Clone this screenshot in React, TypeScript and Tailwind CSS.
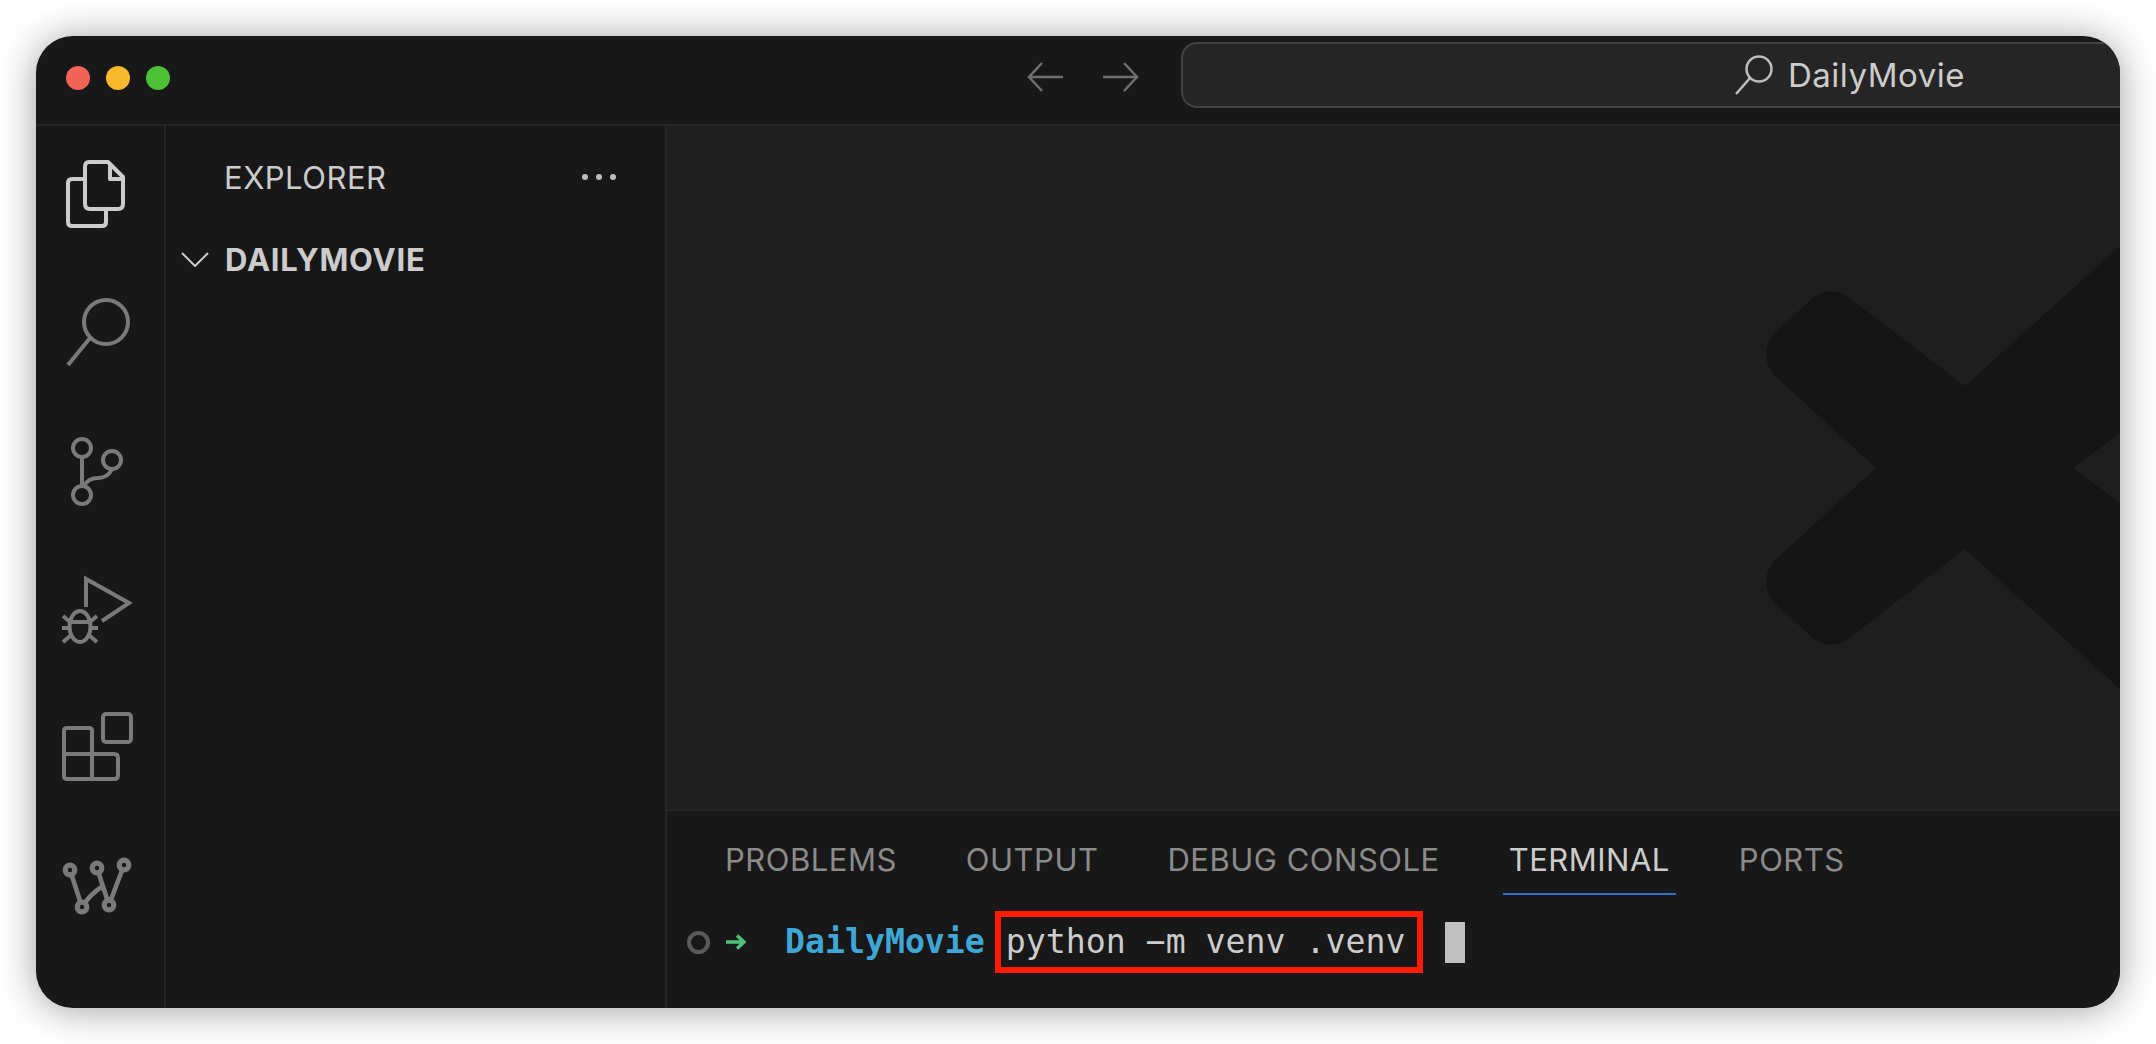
import React from "react";

const ui = "font-['Inter','Noto_Sans',sans-serif]";

function Cell({ i, children }: { i: number; children: React.ReactNode }) {
  const y0 = 127 + 139 * i;
  return (
    <svg
      width="128"
      height="139"
      viewBox={`36 ${y0} 128 139`}
      fill="none"
      strokeWidth="4"
      strokeLinejoin="round"
      className="block shrink-0"
    >
      {children}
    </svg>
  );
}

function WDot({ x, y }: { x: number; y: number }) {
  return (
    <g>
      <circle cx={x} cy={y} r="7.4" fill="#7a7a7a" />
      <circle cx={x} cy={y} r="2.2" fill="#181818" />
    </g>
  );
}

function ActivityBar() {
  const c = "#7a7a7a";
  return (
    <div className="w-[128px] shrink-0 flex flex-col border-r-2 border-[#262626] box-content">
      <Cell i={0}>
        <path stroke="#cccccc" d="M89 163H108L123 178V205Q123 210 118 210H90Q85 210 85 205V168Q85 163 89 163Z" />
        <path stroke="#cccccc" d="M110 165V180H123" />
        <path stroke="#cccccc" d="M85 180H72Q68 180 68 184V223Q68 227 72 227H102Q106 227 106 223V210" />
      </Cell>
      <Cell i={1}>
        <circle cx="106" cy="323" r="22" stroke={c} />
        <path stroke={c} d="M90 339L68 366" />
      </Cell>
      <Cell i={2}>
        <circle cx="82" cy="449" r="9" stroke={c} />
        <circle cx="112" cy="461" r="9" stroke={c} />
        <circle cx="82" cy="496" r="9" stroke={c} />
        <path stroke={c} d="M82 458V487M84 487Q88 479 98 479Q108 479 112 470" />
      </Cell>
      <Cell i={3}>
        <path stroke={c} d="M86 608V580L129 604L102 622" strokeLinejoin="miter" />
        <ellipse cx="80" cy="627.5" rx="10.5" ry="15.5" stroke={c} />
        <path stroke={c} d="M70 623H90M62 629H69M91 629H98M63 617L69 622M97 617L91 622M63 643L70 637M97 643L90 637" />
      </Cell>
      <Cell i={4}>
        <path stroke={c} d="M67 729H89Q92 729 92 732V780H67Q64 780 64 777V732Q64 729 67 729Z" />
        <path stroke={c} d="M64 755H114Q118 755 118 759V776Q118 780 114 780H92" />
        <rect x="103" y="715" width="28" height="28" rx="3" stroke={c} />
      </Cell>
      <Cell i={5}>
        <path stroke={c} strokeWidth="4.6" d="M70 871L82 908Q90 895 103 887M97 869L109 906L124 866" />
        <WDot x={70} y={871} />
        <WDot x={97} y={869} />
        <WDot x={124} y={866} />
        <WDot x={82} y={908} />
        <WDot x={109} y={906} />
      </Cell>
    </div>
  );
}

function Sidebar() {
  return (
    <div className={`w-[499px] shrink-0 border-r-2 border-[#262626] box-content flex flex-col text-[#cccccc] ${ui}`}>
      <div className="h-[102px] flex items-center justify-between pl-[58px] pr-[48px]">
        <span className="text-[31px] leading-none tracking-[0.5px]">EXPLORER</span>
        <svg width="36" height="6" viewBox="0 0 36 6" fill="#bdbdbd">
          <circle cx="4" cy="3" r="3" />
          <circle cx="18" cy="3" r="3" />
          <circle cx="32" cy="3" r="3" />
        </svg>
      </div>
      <div className="h-[62px] flex items-center pl-[15px]">
        <svg width="28" height="15" viewBox="0 0 28 15" fill="none" stroke="#cccccc" strokeWidth="2">
          <path d="M1 1L14 14L27 1" />
        </svg>
        <span className="ml-[16px] text-[31px] leading-none font-bold tracking-[0.8px]">DAILYMOVIE</span>
      </div>
    </div>
  );
}

function Watermark() {
  return (
    <svg className="absolute left-[1099px] top-[74px]" width="354" height="610" viewBox="1766 200 354 610" fill="#151515">
      <path d="M1965 386L2120 246V433L2073 468L2120 503V689L1965 549L1848 639Q1831 650 1815 640L1775 603Q1757 581 1775 560L1876 468L1775 376Q1757 354 1775 333L1815 296Q1831 286 1848 297Z" />
    </svg>
  );
}

const tabs: [string, number][] = [
  ["PROBLEMS", 0],
  ["OUTPUT", 0],
  ["DEBUG CONSOLE", 0],
  ["TERMINAL", 1],
  ["PORTS", 0],
];

function Panel() {
  return (
    <div className="h-[199px] shrink-0 border-t-2 border-[#262626] bg-[#181818] flex flex-col">
      <div className={`h-[84px] flex pl-[58px] gap-[69px] ${ui}`}>
        {tabs.map(([t, active]) => (
          <div key={t} className="relative h-full flex items-center pt-[13px]">
            <span className={`text-[31px] leading-none tracking-[0.5px] ${active ? "text-[#cccccc]" : "text-[#8b8b8b]"}`}>{t}</span>
            {active ? <div className="absolute -left-[6px] -right-[6px] bottom-0 h-[2px] bg-[#2f6fd0]" /> : null}
          </div>
        ))}
      </div>
      <div className="flex items-center h-[96px] pb-[2px] pl-[20px] font-['DejaVu_Sans_Mono',monospace] text-[33.2px] leading-none text-[#cccccc]">
        <div className="w-[23px] h-[23px] rounded-full border-[4px] border-[#5a5a5a]" />
        <svg className="ml-[16px]" width="20" height="16" viewBox="0 0 20 16" fill="none" stroke="#4cc277" strokeWidth="3.5">
          <path d="M0 8H17M11 1.5L18 8L11 14.5" />
        </svg>
        <span className="ml-[39px] font-bold text-[#3fa7d6]">DailyMovie</span>
        <div className="ml-[10px] w-[428px] h-[62px] border-[6px] border-[#ff1a00] flex items-center pl-[5px] whitespace-pre">python −m venv .venv</div>
        <div className="ml-[22px] w-[20px] h-[41px] bg-[#c0c0c0]" />
      </div>
    </div>
  );
}

export default function App() {
  return (
    <div className="w-[2156px] h-[1044px] bg-white p-[36px] overflow-hidden">
      <div className="w-[2084px] h-[972px] rounded-[37px] overflow-hidden bg-[#181818] flex flex-col shadow-[0_2px_38px_rgba(0,0,0,0.38)]">
        <div className="h-[90px] shrink-0 box-border border-b-2 border-[#262626] flex items-start">
          <div className="mt-[30px] ml-[30px] flex gap-[16px]">
            <div className="w-[24px] h-[24px] rounded-full bg-[#f46357]" />
            <div className="w-[24px] h-[24px] rounded-full bg-[#f8b82e]" />
            <div className="w-[24px] h-[24px] rounded-full bg-[#4cc136]" />
          </div>
          <div className="ml-[857px] mt-[26px] flex gap-[40px]">
            <svg width="36" height="30" viewBox="0 0 36 30" fill="none" stroke="#6f6f6f" strokeWidth="2.5">
              <path d="M15 1L2 15L15 29M2 15H36" />
            </svg>
            <svg width="36" height="30" viewBox="0 0 36 30" fill="none" stroke="#6f6f6f" strokeWidth="2.5">
              <path d="M21 1L34 15L21 29M34 15H0" />
            </svg>
          </div>
          <div className={`ml-[42px] mt-[6px] w-[1000px] h-[66px] shrink-0 rounded-[16px] border-2 border-[#444444] bg-[#252525] flex items-center pl-[552px] text-[#cccccc] ${ui}`}>
            <svg width="38" height="40" viewBox="0 0 38 40" fill="none" stroke="#bdbdbd" strokeWidth="2.5">
              <circle cx="24" cy="14" r="12.5" />
              <path d="M15 23L1 39" />
            </svg>
            <span className="ml-[15px] text-[33px] leading-none tracking-[0.5px]">DailyMovie</span>
          </div>
        </div>
        <div className="flex-1 min-h-0 flex">
          <ActivityBar />
          <Sidebar />
          <div className="flex-1 min-w-0 flex flex-col">
            <div className="flex-1 relative bg-[#1e1e1e] overflow-hidden">
              <Watermark />
            </div>
            <Panel />
          </div>
        </div>
      </div>
    </div>
  );
}
